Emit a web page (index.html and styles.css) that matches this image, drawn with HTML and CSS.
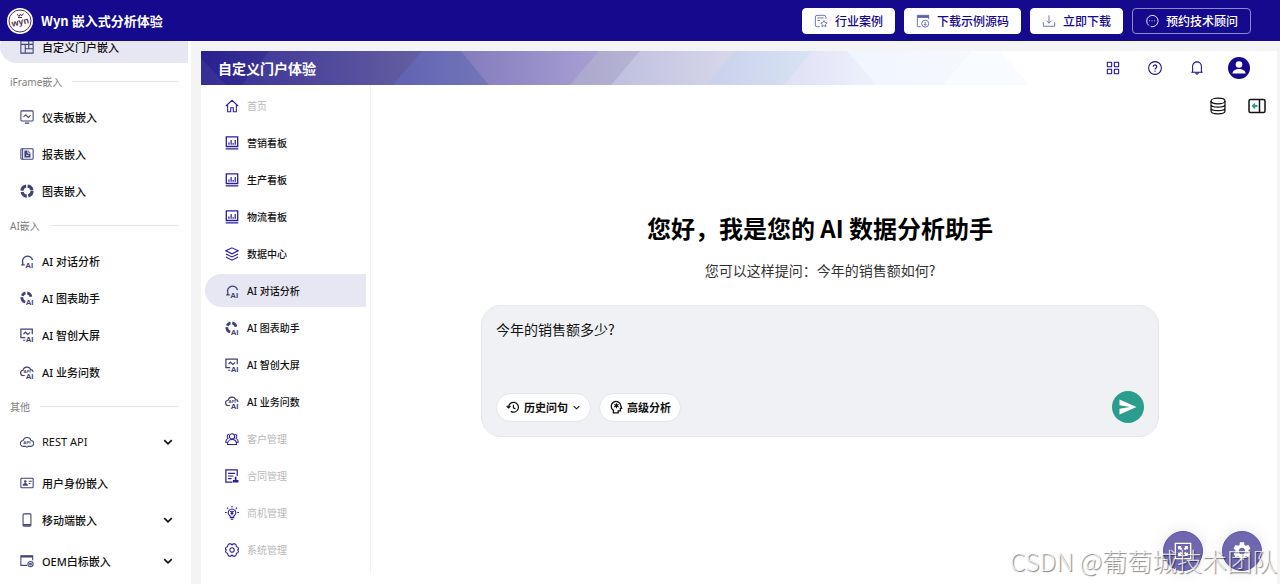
FILE: index.html
```
<!DOCTYPE html>
<html lang="zh-CN">
<head>
  <meta charset="utf-8">
  <title>Wyn 嵌入式分析体验</title>
  <link rel="stylesheet" href="styles.css">
</head>
<body>
  <!-- icon set -->
  <svg class="sprite" aria-hidden="true">
    <symbol id="i-portal" viewBox="0 0 16 16"><path d="M1 1h14v14H1zM1 5h14M6 5v10M6 10h9M10 1v9"/></symbol>
    <symbol id="i-monitor" viewBox="0 0 16 16"><rect x="1" y="1" width="14" height="11.500" rx="1"/><path d="M4 8l2.500-2.500 3 3L12 6M5.500 15h5"/></symbol>
    <symbol id="i-report" viewBox="0 0 16 16"><rect x="1" y="2" width="14" height="12" rx="1"/><path d="M3 2v12"/><path class="solid" d="M5 4h4.500L12 6.500V12H5z"/><path class="cut" d="M9 4v3h3M7 9.500h3"/></symbol>
    <symbol id="i-donut" viewBox="0 0 16 16"><circle cx="8" cy="8" r="5.800" stroke-width="3.600" stroke-dasharray="7.400 1.710"/></symbol>
    <symbol id="i-chat-ai" viewBox="0 0 16 16"><path stroke-width="1.500" d="M5.500 12.500H2.300l1-2A5.800 5.800 0 1 1 14.300 7"/><text x="6" y="15.500">AI</text></symbol>
    <symbol id="i-donut-ai" viewBox="0 0 16 16"><path stroke-width="3.200" d="M6 12.600A5.300 5.300 0 0 1 2.200 7M2.600 5.400A5.300 5.300 0 0 1 6.300 2.200M8.300 2.100A5.300 5.300 0 0 1 12.500 6.500"/><text x="6.500" y="15.800">AI</text></symbol>
    <symbol id="i-screen-ai" viewBox="0 0 16 16"><path stroke-width="1.400" d="M6 11H1V1.200h13V7M4 7l2.200-2.200L9 7.300 11.500 5M3.500 14h2.500"/><text x="6.500" y="15.800">AI</text></symbol>
    <symbol id="i-cloud-ai" viewBox="0 0 16 16"><path stroke-width="1.400" d="M5.500 12H4a3 3 0 0 1-.5-6 4.500 4.500 0 0 1 8.700-.6A3 3 0 0 1 15 8"/><text class="tiny" x="4" y="8.800">API</text><text x="6.500" y="15.800">AI</text></symbol>
    <symbol id="i-cloud" viewBox="0 0 16 16"><path d="M6.500 13H4a3.300 3.300 0 0 1-.5-6.600 4.700 4.700 0 0 1 9-.2A3.400 3.400 0 0 1 12 13h-1.500M6.500 13l2 1.500M8.500 13h2"/><text class="tiny" x="3.800" y="10.300">API</text></symbol>
    <symbol id="i-card" viewBox="0 0 16 16"><rect x="1" y="2.500" width="14" height="11" rx="1"/><circle class="solid" cx="6" cy="6.300" r="1.500"/><path class="solid" d="M3 11c0-4 6-4 6 0z"/><path d="M10 6h3.500M10 8.500h2"/></symbol>
    <symbol id="i-phone" viewBox="0 0 16 16"><rect x="3.500" y="1" width="9" height="14" rx="1"/><path stroke-width="1.800" d="M3.500 13.500h9"/></symbol>
    <symbol id="i-brand" viewBox="0 0 16 16"><path d="M8 13H1V2h13.500v5"/><path stroke-width="2" d="M1 3h13.500"/><circle cx="12" cy="11.500" r="3"/><circle cx="12" cy="11.500" r="1"/></symbol>
    <symbol id="i-down" viewBox="0 0 16 16"><path d="M3 5.500l5 5 5-5"/></symbol>
    <symbol id="i-home" viewBox="0 0 16 16"><path d="M1 8l7-6.500L15 8M3 6.800V14.500h3.500V10h3v4.500H13V6.800"/></symbol>
    <symbol id="i-board" viewBox="0 0 16 16"><path d="M1.500 1h13v11h-13zM.8 14.800h14.400" stroke-width="1.500"/><path d="M4.500 10V7.500M7 10V4.500M9.300 10V8M11.700 10V4.500" stroke-width="1.400"/></symbol>
    <symbol id="i-layers" viewBox="0 0 16 16"><path d="M8 1l7 3.300L8 7.800 1 4.300zM1 8l7 3.400L15 8M1 11.500L8 15l7-3.500"/></symbol>
    <symbol id="i-users" viewBox="0 0 16 16"><circle cx="8" cy="5" r="3"/><path d="M2.800 14.300c0-7.500 10.400-7.500 10.400 0zM4.800 2.500A2.500 2.500 0 0 0 3.500 7C1.700 8 .8 9.500.8 11.800h2.500M11.200 2.500A2.500 2.500 0 0 1 12.500 7c1.800 1 2.700 2.500 2.700 4.800h-2.500"/></symbol>
    <symbol id="i-contract" viewBox="0 0 16 16"><path stroke-width="1.400" d="M8.500 15H1V1h13v7M3.500 5h8M3.500 8h6M3.500 11h4"/><path class="solid" d="M9 15.500v-2.800h2c.8-1-.7-4 1.200-4.200 1.900.2.400 3.200 1.200 4.200h2v2.800z"/></symbol>
    <symbol id="i-bulb" viewBox="0 0 16 16"><path d="M6 11.500a4.300 4.300 0 1 1 4 0V13H6zM6.500 15h3M8 0v1.700M0 7.500h2M14 7.500h2M2.300 2l1.300 1.200M13.700 2l-1.300 1.200M6 6l2 1.500L10 6M8 5.500v5M6.500 8.500h3"/></symbol>
    <symbol id="i-gear" viewBox="0 0 16 16"><path d="M4.700 1h2L8 2.200 9.300 1h2l1.400 1.200.3 2 1.800.8.700 2-1.200 1 1.200 1-.7 2-1.800.8-.3 2-1.400 1.200h-2L8 13.800 6.700 15h-2l-1.400-1.200-.3-2-1.800-.8-.7-2 1.200-1-1.200-1 .7-2 1.800-.8.300-2z"/><circle cx="8" cy="8" r="2.500"/></symbol>
    <symbol id="i-case" viewBox="0 0 16 16"><path d="M6.500 14.500h-3a2 2 0 0 1-2-2v-9a2 2 0 0 1 2-2h8a2 2 0 0 1 2 2V5.500M4 4.500h7M4 7.500h3M11.300 7.500l1.200 2.300 2.500.4-1.800 1.800.4 2.500-2.300-1.200L9 14.500l.4-2.500-1.800-1.800 2.500-.4z"/></symbol>
    <symbol id="i-source" viewBox="0 0 16 16"><path d="M5.500 14.500H2.500a1 1 0 0 1-1-1v-12h13V6M1.500 4h13"/><path stroke-width="2" d="M1.500 2.500h13"/><circle cx="10.500" cy="11" r="4"/><path d="M10.500 9v4M9 11.500l1.500 1.500 1.500-1.500"/></symbol>
    <symbol id="i-download" viewBox="0 0 16 16"><path d="M8 1.500v9M5 7.500l3 3 3-3M1.500 9.500v4.500h13V9.500"/></symbol>
    <symbol id="i-talk" viewBox="0 0 16 16"><path d="M4.500 13.200A6.500 6.500 0 1 1 9 14.500H6.500M4.500 7.800h1M7.500 7.800h1M10.500 7.800h1"/></symbol>
    <symbol id="i-grid" viewBox="0 0 16 16"><rect x="1.500" y="1.500" width="5" height="5" rx=".5"/><rect x="9.500" y="1.500" width="5" height="5" rx=".5"/><rect x="1.500" y="9.500" width="5" height="5" rx=".5"/><rect x="9.500" y="9.500" width="5" height="5" rx=".5"/></symbol>
    <symbol id="i-help" viewBox="0 0 16 16"><circle cx="8" cy="8" r="7.300"/><path d="M6 6.500a2 2 0 1 1 3 1.700c-.8.500-1 .8-1 1.500M8 11v1.200" stroke-width="1.300"/></symbol>
    <symbol id="i-bell" viewBox="0 0 16 16"><path d="M3 12.800V6a5 5 0 0 1 10 0v6.800M1.500 12.800h13M6.500 13.500c.5 2 2.500 2 3 0"/></symbol>
    <symbol id="i-user" viewBox="0 0 22 22"><circle class="solid" cx="11" cy="11" r="11"/><circle class="hole" cx="11" cy="7.500" r="3.300"/><path class="hole" d="M4.500 16.500c0-6 13-6 13 0z"/></symbol>
    <symbol id="i-db" viewBox="0 0 18 18"><ellipse cx="9" cy="4" rx="7" ry="2.800"/><path d="M2 4v10c0 3.700 14 3.700 14 0V4M2 7.500c0 3.500 14 3.500 14 0M2 11c0 3.500 14 3.500 14 0"/></symbol>
    <symbol id="i-collapse" viewBox="0 0 18 18"><rect x="1" y="2.500" width="16" height="13" rx="1.500" stroke-width="1.500"/><path d="M11.500 2.500v13" stroke-width="1.500"/><path class="accent" d="M9.500 9H5M7 6.500L4.800 9 7 11.500" stroke-width="1.800"/></symbol>
    <symbol id="i-history" viewBox="0 0 16 16"><path stroke-width="1.400" d="M3 8.500A5.600 5.600 0 1 1 5.500 13M.8 6.900L3 9l2.200-2M8.500 5.500V9l2.300 1.300"/></symbol>
    <symbol id="i-mind" viewBox="0 0 16 16"><path stroke-width="1.500" d="M5 14.700v-3A5.500 5.500 0 1 1 13.500 6.500l1 3h-1.500v3h-2.500v2.200z"/><circle class="solid" cx="8.500" cy="6.500" r="1.600"/><path stroke-width="1.200" d="M8.500 3.700v5.600M6 5l5 3M11 5L6 8"/></symbol>
    <symbol id="i-send" viewBox="0 0 18 16"><path class="solid" d="M.5.500L17.500 8 .5 15.500V9.700L11 8 .5 6.300z"/></symbol>
    <symbol id="i-expand" viewBox="0 0 20 20"><path stroke-width="1.500" d="M1.500 1.500h17v17h-17z"/><path class="solid" d="M4.500 4.500h4L7.400 5.600l1.900 1.900-1.800 1.800-1.900-1.900-1.100 1.100zM15.500 4.500v4l-1.100-1.100-1.900 1.900-1.800-1.800 1.900-1.900-1.100-1.100zM4.500 15.500v-4l1.100 1.100 1.900-1.900 1.800 1.800-1.900 1.900 1.100 1.100zM15.500 15.500h-4l1.100-1.100-1.900-1.900 1.800-1.800 1.900 1.900 1.100-1.100z"/></symbol>
    <symbol id="i-cog" viewBox="2 2 20 20"><path class="solid" d="M19.140 12.940c.04-.3.060-.610.060-.940 0-.320-.020-.640-.070-.940l2.030-1.580c.180-.140.230-.410.120-.610l-1.920-3.320c-.120-.220-.370-.290-.590-.220l-2.390.960c-.5-.380-1.030-.7-1.620-.940l-.360-2.540c-.040-.240-.240-.410-.480-.410h-3.840c-.240 0-.430.170-.470.410l-.360 2.540c-.590.240-1.130.570-1.620.940l-2.390-.960c-.220-.080-.470 0-.590.220L2.740 8.870c-.120.210-.080.470.120.610l2.030 1.580c-.050.3-.090.630-.090.940s.020.640.070.940l-2.030 1.580c-.180.140-.230.410-.120.610l1.920 3.320c.120.220.370.290.590.220l2.390-.960c.5.380 1.030.7 1.620.940l.360 2.540c.050.240.240.410.480.410h3.840c.240 0 .440-.170.470-.410l.360-2.540c.590-.240 1.130-.560 1.620-.940l2.390.960c.220.080.470 0 .590-.220l1.920-3.320c.120-.220.070-.470-.120-.610zM12 15.600c-1.980 0-3.600-1.620-3.600-3.600s1.620-3.600 3.600-3.600 3.600 1.620 3.600 3.600-1.620 3.600-3.600 3.600z"/></symbol>
  </svg>

  <header class="topbar">
    <svg class="logo" viewBox="0 0 26 26" aria-hidden="true">
      <circle class="logo-disc" cx="13" cy="13" r="13"/>
      <circle class="logo-ring" cx="13" cy="13" r="11"/>
      <text class="logo-text" x="13" y="17" transform="rotate(-12 13 13)">wyn</text>
      <path class="logo-leaf" d="M10 6l2 2.500L13.500 6l1 2L16.500 5.500M11 9.500h4"/>
    </svg>
    <h1>Wyn 嵌入式分析体验</h1>
    <div class="topbar-actions">
      <button class="btn"><svg><use href="#i-case"/></svg>行业案例</button>
      <button class="btn"><svg><use href="#i-source"/></svg>下载示例源码</button>
      <button class="btn"><svg><use href="#i-download"/></svg>立即下载</button>
      <button class="btn btn-outline"><svg><use href="#i-talk"/></svg>预约技术顾问</button>
    </div>
  </header>

  <div class="layout">
    <nav class="sidebar">
      <a class="item active" href="#"><svg><use href="#i-portal"/></svg>自定义门户嵌入</a>
      <div class="section">iFrame嵌入</div>
      <a class="item" href="#"><svg><use href="#i-monitor"/></svg>仪表板嵌入</a>
      <a class="item" href="#"><svg><use href="#i-report"/></svg>报表嵌入</a>
      <a class="item" href="#"><svg><use href="#i-donut"/></svg>图表嵌入</a>
      <div class="section">AI嵌入</div>
      <a class="item" href="#"><svg><use href="#i-chat-ai"/></svg>AI 对话分析</a>
      <a class="item" href="#"><svg><use href="#i-donut-ai"/></svg>AI 图表助手</a>
      <a class="item" href="#"><svg><use href="#i-screen-ai"/></svg>AI 智创大屏</a>
      <a class="item" href="#"><svg><use href="#i-cloud-ai"/></svg>AI 业务问数</a>
      <div class="section">其他</div>
      <a class="item group latin" href="#"><svg><use href="#i-cloud"/></svg>REST API<svg class="caret"><use href="#i-down"/></svg></a>
      <a class="item" href="#"><svg><use href="#i-card"/></svg>用户身份嵌入</a>
      <a class="item group" href="#"><svg><use href="#i-phone"/></svg>移动端嵌入<svg class="caret"><use href="#i-down"/></svg></a>
      <a class="item group" href="#"><svg><use href="#i-brand"/></svg>OEM白标嵌入<svg class="caret"><use href="#i-down"/></svg></a>
    </nav>

    <main class="portal">
      <div class="banner">
        <svg class="banner-art" viewBox="0 0 828 34" aria-hidden="true">
          <defs>
            <linearGradient id="g1"><stop offset="0" stop-color="#2a2090"/><stop offset="1" stop-color="#5b569b"/></linearGradient>
            <linearGradient id="g2"><stop offset="0" stop-color="#6062b3"/><stop offset="1" stop-color="#7476b8"/></linearGradient>
            <linearGradient id="g3"><stop offset="0" stop-color="#837bbd"/><stop offset="1" stop-color="#a8a0d4"/></linearGradient>
            <linearGradient id="g4"><stop offset="0" stop-color="#aaa7cd"/><stop offset="1" stop-color="#b7b3d3"/></linearGradient>
            <linearGradient id="g5"><stop offset="0" stop-color="#bebfe0"/><stop offset="1" stop-color="#d8d7e9"/></linearGradient>
            <linearGradient id="g6"><stop offset="0" stop-color="#c8d0ec"/><stop offset="1" stop-color="#d8e3f2"/></linearGradient>
            <linearGradient id="g7"><stop offset="0" stop-color="#dfe0f4"/><stop offset="1" stop-color="#eef1fd"/></linearGradient>
            <linearGradient id="g8"><stop offset="0" stop-color="#f0f5ff"/><stop offset="1" stop-color="#f5f8fc"/></linearGradient>
          </defs>
          <path fill="url(#g1)" d="M0 0h223l-29 34H0z"/>
          <path class="glint" d="M0 7l25 27H0zM68 0L41 34h152L221 0z"/>
          <path fill="url(#g2)" d="M221 0h40l28 34h-97z"/>
          <path fill="url(#g3)" d="M260 0h140l-29 34h-83z"/>
          <path fill="url(#g4)" d="M398 0h43l-29 34h-43z"/>
          <path fill="url(#g5)" d="M439 0h97l-29 34h-97z"/>
          <path fill="url(#g6)" d="M534 0h79l-28 34h-80z"/>
          <path fill="url(#g7)" d="M611 0h36l30 34h-94z"/>
          <path fill="url(#g8)" d="M646 0h127l-29 34h-68z"/>
          <path fill="#f8fbff" d="M771 0h28l29 34h-86z"/>
        </svg>
        <h2>自定义门户体验</h2>
        <div class="banner-tools">
          <button aria-label="应用"><svg><use href="#i-grid"/></svg></button>
          <button aria-label="帮助"><svg><use href="#i-help"/></svg></button>
          <button aria-label="通知"><svg><use href="#i-bell"/></svg></button>
          <button aria-label="账户"><svg class="avatar"><use href="#i-user"/></svg></button>
        </div>
      </div>

      <div class="portal-body">
        <nav class="menu">
          <a class="item disabled" href="#"><svg><use href="#i-home"/></svg>首页</a>
          <a class="item" href="#"><svg><use href="#i-board"/></svg>营销看板</a>
          <a class="item" href="#"><svg><use href="#i-board"/></svg>生产看板</a>
          <a class="item" href="#"><svg><use href="#i-board"/></svg>物流看板</a>
          <a class="item" href="#"><svg><use href="#i-layers"/></svg>数据中心</a>
          <a class="item slate active" href="#"><svg><use href="#i-chat-ai"/></svg>AI 对话分析</a>
          <a class="item slate" href="#"><svg><use href="#i-donut-ai"/></svg>AI 图表助手</a>
          <a class="item slate" href="#"><svg><use href="#i-screen-ai"/></svg>AI 智创大屏</a>
          <a class="item slate" href="#"><svg><use href="#i-cloud-ai"/></svg>AI 业务问数</a>
          <a class="item disabled" href="#"><svg><use href="#i-users"/></svg>客户管理</a>
          <a class="item disabled" href="#"><svg><use href="#i-contract"/></svg>合同管理</a>
          <a class="item disabled" href="#"><svg><use href="#i-bulb"/></svg>商机管理</a>
          <a class="item disabled" href="#"><svg><use href="#i-gear"/></svg>系统管理</a>
        </nav>

        <section class="chat">
          <div class="chat-tools">
            <button aria-label="数据集"><svg><use href="#i-db"/></svg></button>
            <button aria-label="展开面板"><svg><use href="#i-collapse"/></svg></button>
          </div>
          <h3>您好，我是您的 AI 数据分析助手</h3>
          <p class="hint">您可以这样提问：今年的销售额如何?</p>
          <form class="composer">
            <textarea aria-label="问题">今年的销售额多少?</textarea>
            <div class="composer-bar">
              <button type="button" class="pill"><svg><use href="#i-history"/></svg>历史问句<svg class="pill-caret"><use href="#i-down"/></svg></button>
              <button type="button" class="pill"><svg><use href="#i-mind"/></svg>高级分析</button>
              <button type="button" class="send" aria-label="发送"><svg><use href="#i-send"/></svg></button>
            </div>
          </form>
        </section>
      </div>
    </main>
  </div>

  <div class="floaters">
    <button aria-label="全屏"><svg><use href="#i-expand"/></svg></button>
    <button aria-label="设置"><svg><use href="#i-cog"/></svg></button>
  </div>
  <div class="watermark">CSDN @葡萄城技术团队</div>
</body>
</html>
```
FILE: styles.css
```
* {
  box-sizing: border-box;
}

body {
  margin: 0;
  height: 100vh;
  display: flex;
  flex-direction: column;
  overflow: hidden;
  font-family: "Noto Sans", "Noto Sans CJK SC", sans-serif;
  font-size: 11px;
  color: #111;
  background-color: #f4f4f4;
}

h1, h2, h3, p {
  margin: 0;
}

a {
  color: inherit;
  text-decoration: none;
}

button {
  font: inherit;
  color: inherit;
  border: none;
  background: none;
  padding: 0;
  display: flex;
  align-items: center;
  justify-content: center;
  cursor: pointer;
}

svg {
  width: 14px;
  height: 14px;
  flex: none;
  fill: none;
  stroke: currentColor;
  stroke-width: 1.2;
}

.sprite {
  display: none;
}

symbol text {
  font: bold 9px "Liberation Sans", sans-serif;
  fill: currentColor;
  stroke: none;
}

symbol .tiny {
  font-size: 5px;
}

.solid {
  fill: currentColor;
  stroke: none;
}

.hole {
  fill: #fff;
  stroke: none;
}

.cut {
  stroke: #fff;
  stroke-width: 1;
}

.accent {
  stroke: #2a9d8f;
}

/* Top bar */
.topbar {
  position: relative;
  z-index: 2;
  height: 41px;
  flex: none;
  display: flex;
  align-items: center;
  padding: 0 29px 0 7px;
  background-color: #150a8e;
  color: #fff;
}

.logo {
  width: 26px;
  height: 26px;
  margin-right: 8px;
}

.logo-disc {
  fill: #fff;
  stroke: none;
}

.logo-ring,
.logo-leaf {
  stroke: #57304f;
  stroke-width: 1;
}

.logo-text {
  font: bold 9px "Liberation Sans", sans-serif;
  text-anchor: middle;
  fill: #57304f;
  stroke: none;
}

.topbar h1 {
  font-family: "Noto Sans CJK SC", sans-serif;
  font-size: 13px;
  line-height: 20px;
}

.topbar-actions {
  margin-left: auto;
  display: flex;
  gap: 9px;
}

.btn {
  height: 26px;
  padding: 0 11px;
  gap: 7px;
  border: 1px solid #fff;
  border-radius: 4px;
  background-color: #fff;
  color: #150a8e;
  font-size: 12px;
  font-weight: 500;
}

.btn svg {
  color: #5a65a8;
  stroke-width: 1;
}

.btn-outline {
  padding: 0 12px;
  border-color: #8f8ac8;
  background-color: transparent;
  color: #fff;
}

.btn-outline svg {
  color: #fff;
}

/* Navigation rows */
.layout {
  flex: 1;
  min-height: 0;
  display: flex;
}

.sidebar {
  display: flex;
  flex-direction: column;
  width: 191px;
  flex: none;
  margin-top: -13px;
  background-color: #fff;
}

.item {
  display: flex;
  flex: none;
  align-items: center;
  gap: 8px;
  height: 33px;
  margin: 2px 3px 2px 0;
  padding-left: 20px;
  border-radius: 17px 0 0 17px;
  font-weight: 500;
}

.item svg {
  color: #3e4278;
}

.item.active {
  background-color: #e7e6f3;
}

.item.group {
  margin-bottom: 6px;
}

.item.latin {
  font-weight: 400;
}

.item .caret {
  width: 12px;
  height: 12px;
  margin-left: auto;
  margin-right: 14px;
  color: #111;
  stroke-width: 2.2;
}

.section {
  display: flex;
  flex: none;
  align-items: center;
  gap: 10px;
  height: 33px;
  padding: 0 13px 0 10px;
  font-size: 10px;
  color: #7d7d7d;
}

.section::after {
  content: "";
  flex: 1;
  height: 1px;
  background-color: #e6e6e6;
}

/* Portal */
.portal {
  flex: 1;
  min-width: 0;
  display: flex;
  flex-direction: column;
  margin: 10px 3px 0 10px;
  background-color: #fff;
}

.banner {
  position: relative;
  height: 34px;
  flex: none;
  display: flex;
  align-items: center;
  padding: 0 26px 0 17px;
}

.banner-art {
  position: absolute;
  left: 0;
  top: 0;
  width: 828px;
  height: 34px;
  stroke: none;
}

.glint {
  fill: #fff;
  fill-opacity: 0.06;
}

.banner h2 {
  position: relative;
  font-size: 14px;
  color: #fff;
}

.banner-tools {
  position: relative;
  margin-left: auto;
  display: flex;
  align-items: center;
  gap: 18px;
  color: #150a8e;
}

.banner-tools button {
  width: 24px;
  height: 24px;
}

.banner-tools .avatar {
  width: 22px;
  height: 22px;
}

.portal-body {
  flex: 1;
  display: flex;
  align-items: flex-start;
}

.menu {
  width: 170px;
  flex: none;
  padding: 2px 0 3px 4px;
  border-right: 1px solid #f2f2f5;
  font-size: 10px;
}

.menu .item {
  margin: 0 4px 4px 0;
}

.menu .item:first-child {
  margin-top: 2px;
}

.menu .item svg {
  color: #2a1ea0;
}

.menu .slate svg {
  color: #3e4278;
}

.menu .disabled {
  color: #b8b8b8;
  font-weight: 400;
}

/* Chat */
.chat {
  flex: 1;
  min-width: 0;
  display: flex;
  flex-direction: column;
  align-items: center;
  padding: 12px 8px 0 0;
  font-family: "Noto Sans CJK SC", sans-serif;
}

.chat-tools {
  align-self: flex-end;
  display: flex;
  gap: 21px;
  padding-right: 3px;
}

.chat-tools svg {
  width: 18px;
  height: 18px;
}

.chat h3 {
  margin-top: 95px;
  font-size: 24px;
  line-height: 36px;
  color: #000;
}

.hint {
  margin-top: 14px;
  font-size: 14px;
  line-height: 20px;
  color: #333;
}

.composer {
  width: 100%;
  max-width: 678px;
  margin-top: 25px;
  padding: 13px 14px;
  border: 1px solid #e6e7ec;
  border-radius: 20px;
  background-color: #f0f1f5;
}

.composer textarea {
  display: block;
  width: 100%;
  height: 72px;
  padding: 0;
  border: none;
  outline: none;
  resize: none;
  background: none;
  font: inherit;
  font-size: 14px;
  line-height: 20px;
  color: #111;
}

.composer-bar {
  display: flex;
  align-items: center;
  gap: 8px;
}

.pill {
  height: 29px;
  padding: 0 9px;
  gap: 4px;
  border: 1px solid #e3e4ea;
  border-radius: 15px;
  background-color: #fff;
  font-size: 11px;
  font-weight: 600;
}

.pill .pill-caret {
  width: 9px;
  height: 9px;
  stroke-width: 1.8;
}

.send {
  width: 32px;
  height: 32px;
  margin-left: auto;
  border-radius: 50%;
  background-color: #2a9d8f;
  color: #fff;
}

.send svg {
  width: 18px;
  height: 16px;
}

/* Floating buttons */
.floaters {
  position: absolute;
  right: 18px;
  bottom: 13px;
  display: flex;
  gap: 19px;
}

.floaters button {
  width: 40px;
  height: 40px;
  border: 1px solid #5c51b4;
  border-radius: 50%;
  background-color: #7068ae;
  color: #fff;
  box-shadow: 0 0 16px rgba(0, 0, 0, 0.1);
}

.floaters svg {
  width: 18px;
  height: 18px;
}

.watermark {
  position: absolute;
  right: 3px;
  bottom: 6px;
  font-family: "Noto Sans CJK SC", sans-serif;
  font-size: 25px;
  font-weight: 300;
  line-height: 36px;
  color: rgba(255, 255, 255, 0.8);
  text-shadow: 1px 1px 1px rgba(0, 0, 0, 0.5);
  pointer-events: none;
}
```
